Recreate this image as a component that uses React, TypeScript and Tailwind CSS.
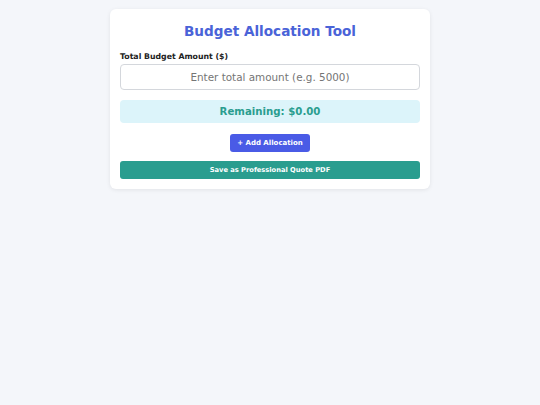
export default function App() {
  return (
    <div className="min-h-screen w-full bg-[#f4f6fa]" style={{ fontFamily: '"DejaVu Sans", sans-serif' }}>
      <div className="flex justify-center pt-[9px]">
        <div className="w-[320px] rounded-[6px] bg-white px-[10px] pt-[12px] pb-[10px] shadow-[0_1px_4px_rgba(0,0,0,0.08)]">
          <h1 className="text-center text-[13.6px] font-bold leading-[20px] text-[#4a63d8]">Budget Allocation Tool</h1>
          <label className="mt-[10px] block text-[7.8px] font-bold leading-[12px] text-[#222]">Total Budget Amount ($)</label>
          <input
            className="mt-[1px] block h-[26px] w-full rounded-[4px] border border-[#d4d7dc] text-center text-[10.4px] text-[#333] outline-none placeholder:text-[#757575]"
            placeholder="Enter total amount (e.g. 5000)"
          />
          <div className="mt-[10px] flex h-[23px] items-center justify-center rounded-[4px] bg-[#dcf4fa] text-[10.2px] font-bold text-[#2a9d8f]">
            Remaining: $0.00
          </div>
          <div className="mt-[11px] flex justify-center">
            <button className="h-[18px] w-[80px] rounded-[3px] bg-[#4a5be6] text-[7px] font-bold text-white">+ Add Allocation</button>
          </div>
          <button className="mt-[9px] block h-[18px] w-full rounded-[3px] bg-[#2a9d8f] text-[6.7px] font-bold text-white">
            Save as Professional Quote PDF
          </button>
        </div>
      </div>
    </div>
  );
}
